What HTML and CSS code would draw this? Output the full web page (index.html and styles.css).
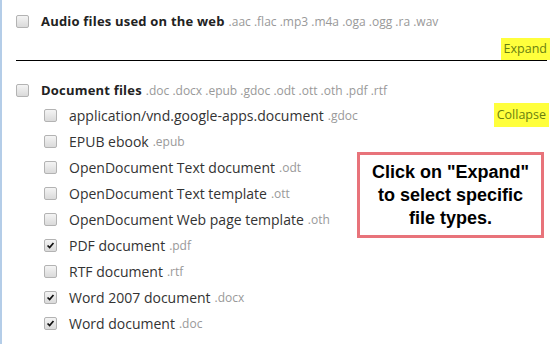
FILE: index.html
```html
<!DOCTYPE html>
<html lang="en">
<head>
    <meta charset="UTF-8">
    <title>File types</title>
    <link rel="stylesheet" href="styles.css">
</head>
<body>
    <div class="panel">
        <div class="group">
            <div class="group-head">
                <span class="box"></span>
                <span class="group-name">Audio files used on the web</span>
                <span class="ext">.aac .flac .mp3 .m4a .oga .ogg .ra .wav</span>
            </div>
            <div class="group-foot">
                <span class="toggle">Expand</span>
            </div>
        </div>

        <div class="group open">
            <div class="group-head">
                <span class="box"></span>
                <span class="group-name">Document files</span>
                <span class="ext">.doc .docx .epub .gdoc .odt .ott .oth .pdf .rtf</span>
            </div>
            <div class="group-body">
                <ul class="types">
                    <li><span class="box"></span>application/vnd.google-apps.document <span class="ext">.gdoc</span></li>
                    <li><span class="box"></span>EPUB ebook <span class="ext">.epub</span></li>
                    <li><span class="box"></span>OpenDocument Text document <span class="ext">.odt</span></li>
                    <li><span class="box"></span>OpenDocument Text template <span class="ext">.ott</span></li>
                    <li><span class="box"></span>OpenDocument Web page template <span class="ext">.oth</span></li>
                    <li><span class="box checked"><svg viewBox="0 0 13 13"><path d="M3 6.5 L5.5 9 L10 3.5" /></svg></span>PDF document <span class="ext">.pdf</span></li>
                    <li><span class="box"></span>RTF document <span class="ext">.rtf</span></li>
                    <li><span class="box checked"><svg viewBox="0 0 13 13"><path d="M3 6.5 L5.5 9 L10 3.5" /></svg></span>Word 2007 document <span class="ext">.docx</span></li>
                    <li><span class="box checked"><svg viewBox="0 0 13 13"><path d="M3 6.5 L5.5 9 L10 3.5" /></svg></span>Word document <span class="ext">.doc</span></li>
                </ul>
                <span class="toggle">Collapse</span>
            </div>
        </div>

        <div class="callout">Click on "Expand" to select specific file types.</div>
    </div>
</body>
</html>
```

FILE: styles.css
```css
body {
    margin: 0;
    background-color: #fff;
    font-family: 'Open Sans', sans-serif;
    color: #333;
}

.panel {
    position: relative;
    height: 344px;
    border-left: 2px solid #b4cde8; /* light blue frame edge */
    padding: 14px 10px 0 14px;
    box-sizing: border-box;
}

.group-head {
    display: flex;
    align-items: center;
    height: 14px;
}

.group-name {
    font-size: 13px;
    font-weight: 700;
    letter-spacing: 0.2px;
    color: #222;
    margin-left: 12px;
    margin-right: 4px;
}

.ext {
    font-size: 12px;
    color: #999;
}

.group-foot {
    display: flex;
    justify-content: flex-end;
    margin-top: 10px;
    border-bottom: 1px solid #000;
    margin-right: 1px;
}

.toggle {
    background-color: #ffff3c;
    color: #6a7f10;
    font-size: 12.5px;
    padding: 2px 3px;
    line-height: 18px;
    margin-right: -3px;
}

.group.open {
    margin-top: 22px;
}

.group-body {
    display: flex;
    align-items: flex-start;
    justify-content: space-between;
    margin-top: 5px;
}

.types {
    list-style: none;
    margin: 0;
    padding: 0 0 0 28px;
}

.types li {
    display: flex;
    align-items: center;
    height: 26px;
    font-size: 14px;
    color: #333;
}

.types .ext {
    margin-left: 4px;
}

.types .box {
    margin-right: 12px;
}

.group-body .toggle {
    margin-top: 1px;
    margin-right: -1px;
    line-height: 20px;
}

.box {
    display: inline-block;
    width: 11px;
    height: 11px;
    border: 1px solid #b3b3b3;
    border-radius: 2px;
    background: linear-gradient(#f4f4f4, #dadada);
    flex-shrink: 0;
}

.box svg {
    display: block;
    width: 11px;
    height: 11px;
}

.box path {
    fill: none;
    stroke: #111;
    stroke-width: 2;
}

.callout {
    position: absolute;
    left: 355px;
    top: 152px;
    width: 187px;
    height: 86px;
    box-sizing: border-box;
    border: 3px solid #e8737a;
    padding: 0 6px;
    display: flex;
    align-items: center;
    justify-content: center;
    text-align: center;
    font-family: 'Liberation Sans', Arial, sans-serif;
    font-weight: 700;
    font-size: 18px;
    line-height: 23px;
    color: #000;
}
```
